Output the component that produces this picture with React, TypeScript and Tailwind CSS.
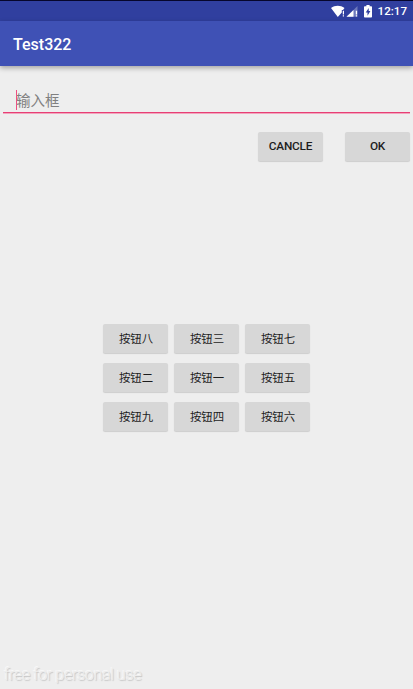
import clsx from "clsx";
import type { ReactNode } from "react";

const keys = [
  "按钮八",
  "按钮三",
  "按钮七",
  "按钮二",
  "按钮一",
  "按钮五",
  "按钮九",
  "按钮四",
  "按钮六",
];

interface Props {
  children: ReactNode;
  className?: string;
}

const RaisedButton = ({ children, className }: Props) => (
  <button
    type="button"
    className={clsx(
      "flex h-[29px] w-[65px] items-center justify-center rounded-[2px] bg-[#d7d7d7] text-[#1d1d1d] shadow-[0_1px_1px_rgba(0,0,0,0.14)]",
      className,
    )}
  >
    {children}
  </button>
);

const StatusBar = () => (
  <div className="flex h-[21px] items-center justify-end border-t border-[#06062c] bg-[#303f9f] pr-[6px] text-white">
    {/* Wifi and mobile signal, both without a connection */}
    <svg width="28" height="12" viewBox="0 0 28 12" fill="currentColor">
      <path d="M0 3.1C4 -.1 9.5 -.1 13.5 3.1L12 4.9H10.8V7.4L6.8 12Z" />
      <path d="M11.8 5.8h1.2v3.6h-1.2zM11.8 10.2h1.2v1.4h-1.2z" />
      <path d="M15.5 11.7 26.5 1V11.7Z" opacity=".3" />
      <path d="M15.5 11.7 22.5 4.9V11.7Z" />
      <path d="M24.8 5.8h1.3v3.6h-1.3zM24.8 10.2h1.3v1.4h-1.3z" />
    </svg>
    <svg
      className="ml-[5px]"
      width="8"
      height="13"
      viewBox="0 0 8 13"
      fill="currentColor"
      fillRule="evenodd"
    >
      <path d="M2.4 0h3.2v1.3h1.6q.8 0 .8.8v9.6q0 .8-.8.8H.8q-.8 0-.8-.8V2.1q0-.8.8-.8h1.6zM4.7 3 1.7 7.5h1.8v3.2l2.9-4.6H4.7z" />
    </svg>
    <span className="ml-[6px] pt-[2px] text-[11.6px] leading-none font-medium">
      12:17
    </span>
  </div>
);

export default function App() {
  return (
    <div className="flex h-[689px] w-[413px] flex-col overflow-hidden bg-[#eeeeee] font-[Roboto,'Noto_Sans_CJK_SC',sans-serif]">
      <StatusBar />
      <header className="flex h-[45px] items-center bg-[#3f51b5] pt-[3px] pl-[13px] shadow-[0_2px_5px_rgba(0,0,0,0.32)]">
        <h1 className="text-base font-medium text-white">Test322</h1>
      </header>

      <div className="mx-[3px] mt-[21px] flex h-[26px] items-start border-b border-[#e73f75] pl-[13px] shadow-[0_1px_0_#f2a5bd]">
        <span className="mt-[3px] h-[20px] w-px shrink-0 bg-[#ee4f83]" />
        <span className="-ml-px pt-[5px] text-[14.5px] leading-[20px] text-[#808080]">
          输入框
        </span>
      </div>

      <div className="mt-[19px] flex justify-end gap-[22px] pr-[3px]">
        <RaisedButton className="pt-px text-[11.8px] font-medium tracking-[-0.2px]">
          CANCLE
        </RaisedButton>
        <RaisedButton className="pt-px text-[11.8px] font-medium tracking-[-0.2px]">
          OK
        </RaisedButton>
      </div>

      <div className="mx-auto mt-[163px] grid grid-cols-3 gap-x-[6px] gap-y-[10px] font-['Noto_Sans_CJK_SC',sans-serif]">
        {keys.map((label) => (
          <RaisedButton key={label} className="pt-px pl-px text-[11.4px]">
            {label}
          </RaisedButton>
        ))}
      </div>

      <footer className="mt-auto pb-[4px] pl-[4px] text-[16.5px] leading-[20px] font-light tracking-[-0.55px] text-[#eeeeee] [text-shadow:1px_1px_1px_#c4c4c4,-1px_-1px_0_#f8f8f8]">
        free for personal use
      </footer>
    </div>
  );
}
